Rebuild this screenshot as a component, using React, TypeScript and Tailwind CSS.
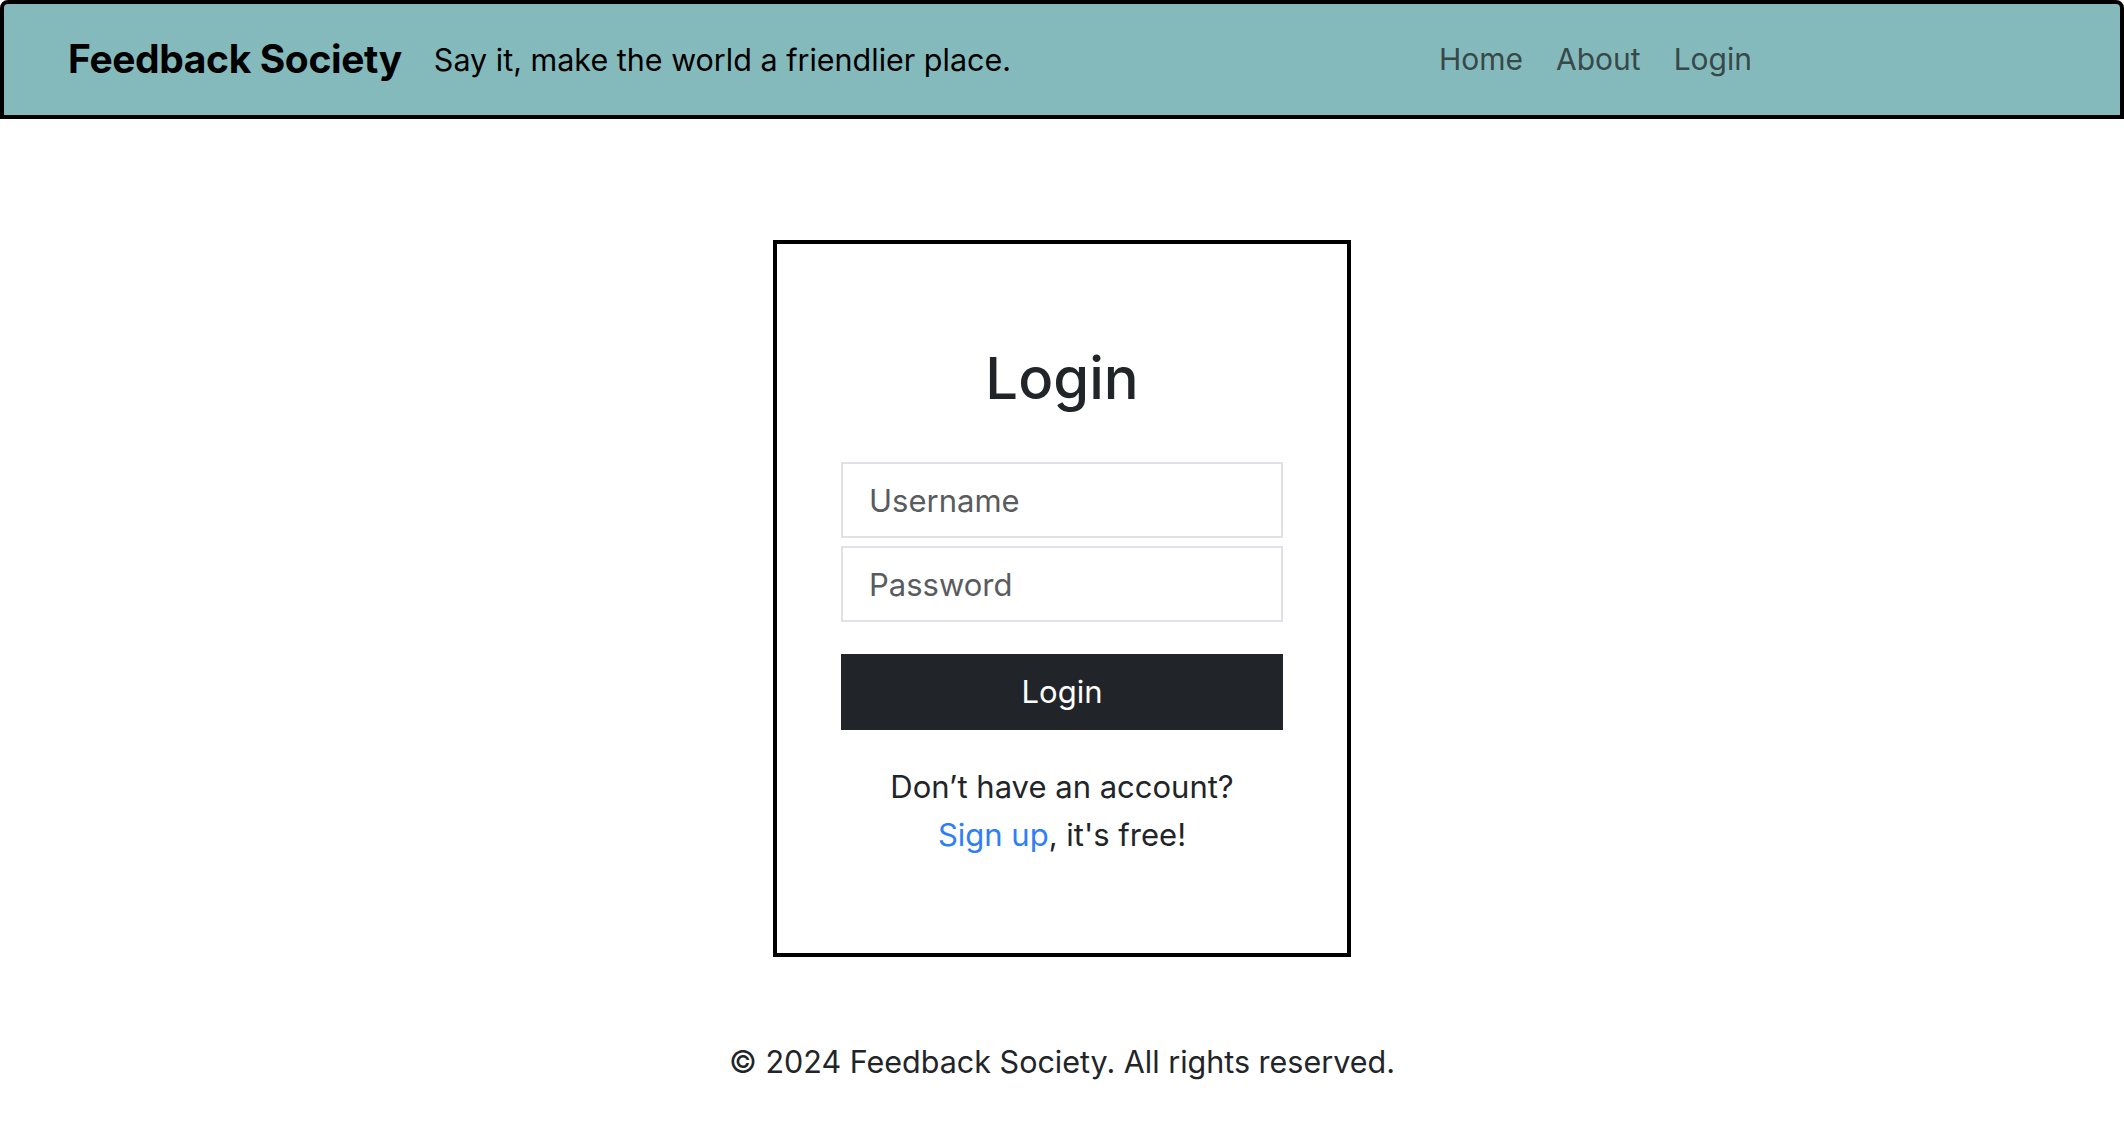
const NAV_LINKS = ["Home", "About", "Login"]

function Header() {
  return (
    <header className="flex h-[119px] items-center rounded-t-[8px] border-4 border-black bg-[#85babd] pl-[64px] pr-[368px]">
      <a href="#" className="text-[39px] font-bold tracking-[-0.01em] text-black">
        Feedback Society
      </a>
      <span className="ml-[32px] text-[30.5px] text-black">
        Say it, make the world a friendlier place.
      </span>
      <nav className="ml-auto flex gap-[33px] text-[30px] text-[#374849]">
        {NAV_LINKS.map((label) => (
          <a key={label} href="#">
            {label}
          </a>
        ))}
      </nav>
    </header>
  )
}

function LoginCard() {
  return (
    <div className="w-[578px] border-4 border-black bg-white px-[64px] pb-[94px] pt-[96px]">
      <h2 className="text-center text-[58px] font-medium leading-[77px] text-[#212529]">Login</h2>
      <form className="mt-[45px] flex flex-col" onSubmit={(e) => e.preventDefault()}>
        <input
          type="text"
          placeholder="Username"
          className="h-[76px] border-2 border-[#dee2e6] px-[26px] text-[31px] text-[#212529] outline-none placeholder:text-[#595c5f]"
        />
        <input
          type="password"
          placeholder="Password"
          className="mt-[8px] h-[76px] border-2 border-[#dee2e6] px-[26px] text-[31px] text-[#212529] outline-none placeholder:text-[#595c5f]"
        />
        <button
          type="submit"
          className="mt-[32px] h-[76px] bg-[#212529] text-[31px] text-white"
        >
          Login
        </button>
      </form>
      <div className="mt-[33px] text-center text-[31px] leading-[48px] text-[#212529]">
        <p>Don’t have an account?</p>
        <p>
          <a href="#" className="text-[#2f7ef7]">
            Sign up
          </a>
          , it's free!
        </p>
      </div>
    </div>
  )
}

export default function App() {
  return (
    <div className="min-h-screen bg-white font-['Inter','Liberation_Sans',sans-serif]">
      <Header />
      <main className="flex justify-center pt-[121px]">
        <LoginCard />
      </main>
      <footer className="mt-[81px] text-center text-[30.5px] leading-[48px] text-[#212529]">
        © 2024 Feedback Society. All rights reserved.
      </footer>
    </div>
  )
}
